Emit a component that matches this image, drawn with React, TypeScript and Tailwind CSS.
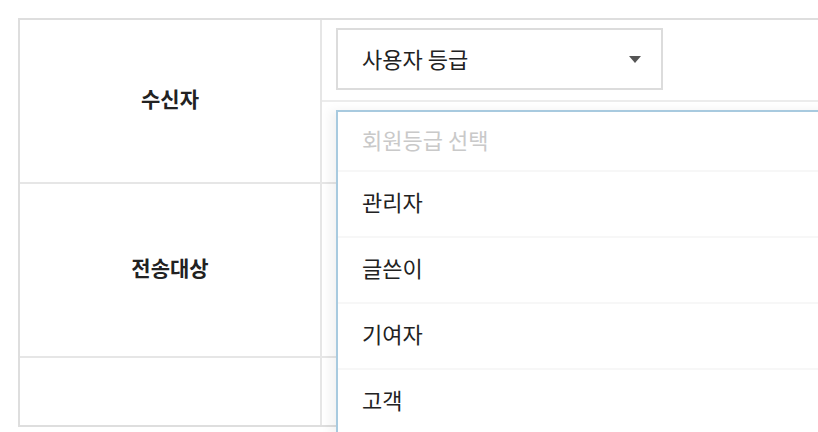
const grades = ["관리자", "글쓴이", "기여자", "고객"];

const font = {
  fontFamily: '"Noto Sans CJK KR", "Noto Sans", sans-serif',
};

export default function App() {
  return (
    <div
      className="relative h-[432px] w-[818px] overflow-hidden bg-white pl-[18px] pt-[18px]"
      style={font}
    >
      {/* form table */}
      <div className="w-[900px] border-2 border-r-0 border-[#dedede]">
        {/* 수신자 */}
        <div className="flex h-[164px] border-b-2 border-[#e6e6e6]">
          <div className="flex w-[302px] shrink-0 items-center justify-center border-r-2 border-[#e6e6e6] pb-[4px] text-[21px] font-bold text-[#222]">
            수신자
          </div>
          <div className="flex-1">
            <div className="border-b-2 border-[#ececec] pb-[10px] pl-[14px] pt-[8px]">
              <div className="flex h-[62px] w-[327px] items-center justify-between border-2 border-[#dcdcdc] pl-6 pr-5 text-[22px] text-[#222]">
                <span className="-mt-[2px]">사용자 등급</span>
                <svg width="12" height="7" viewBox="0 0 12 7">
                  <path d="M0 0h12L6 7z" fill="#555" />
                </svg>
              </div>
            </div>
          </div>
        </div>

        {/* 전송대상 */}
        <div className="flex h-[174px] border-b-2 border-[#e6e6e6]">
          <div className="flex w-[302px] shrink-0 items-center justify-center border-r-2 border-[#e6e6e6] pb-[4px] text-[21px] font-bold text-[#222]">
            전송대상
          </div>
          <div className="flex-1" />
        </div>

        <div className="flex h-[67px]">
          <div className="w-[302px] shrink-0 border-r-2 border-[#e6e6e6]" />
          <div className="flex-1" />
        </div>
      </div>

      {/* open dropdown */}
      <div className="absolute left-[336px] top-[110px] w-[520px] border-2 border-[#a8cadf] bg-white text-[22px] shadow-[-6px_0_10px_rgba(0,0,0,0.05)]">
        <div className="flex h-[58px] items-center pb-[4px] pl-6 text-[#c9c9c9]">
          회원등급 선택
        </div>
        {grades.map((g) => (
          <div
            key={g}
            className="flex h-[66px] items-center border-t-2 border-[#f7f7f7] pb-[6px] pl-6 text-[#222]"
          >
            {g}
          </div>
        ))}
      </div>
    </div>
  );
}
